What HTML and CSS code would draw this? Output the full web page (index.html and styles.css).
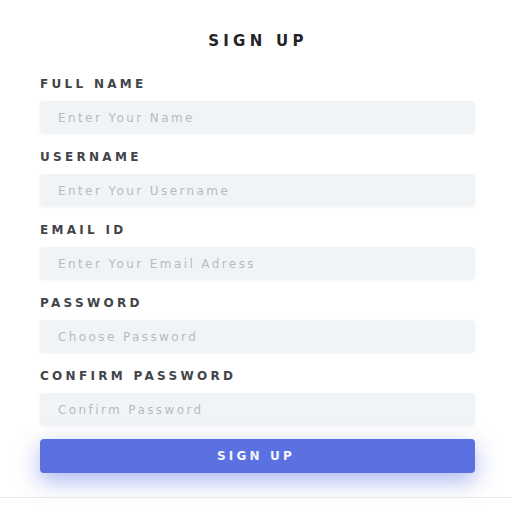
FILE: index.html
```html
<!DOCTYPE html>
<html>
<head>
<meta charset="utf-8">
<link rel="stylesheet" href="styles.css">
</head>
<body>
<div class="page">
  <h1 class="title">SIGN UP</h1>
  <form class="form">
    <div class="field">
      <label class="label">FULL NAME</label>
      <input class="input" type="text" placeholder="Enter Your Name">
    </div>
    <div class="field">
      <label class="label">USERNAME</label>
      <input class="input" type="text" placeholder="Enter Your Username">
    </div>
    <div class="field">
      <label class="label">EMAIL ID</label>
      <input class="input" type="text" placeholder="Enter Your Email Adress">
    </div>
    <div class="field">
      <label class="label">PASSWORD</label>
      <input class="input" type="password" placeholder="Choose Password">
    </div>
    <div class="field">
      <label class="label">CONFIRM PASSWORD</label>
      <input class="input" type="password" placeholder="Confirm Password">
    </div>
    <button class="btn" type="button">SIGN UP</button>
  </form>
  <div class="footer"></div>
</div>
</body>
</html>
```
FILE: styles.css
```css
html, body {
  margin: 0;
  padding: 0;
  background: #ffffff;
  font-family: "DejaVu Sans", "Liberation Sans", sans-serif;
}
.page {
  width: 512px;
  height: 512px;
  display: flex;
  flex-direction: column;
  overflow: hidden;
}
.title {
  margin: 31px 0 0 0;
  height: 20px;
  line-height: 20px;
  font-size: 15px;
  font-weight: bold;
  letter-spacing: 4.3px;
  text-align: center;
  color: #222428;
  padding-left: 4px;
}
.form {
  margin: 25px 37px 0 40px;
  display: flex;
  flex-direction: column;
}
.field {
  display: flex;
  flex-direction: column;
  margin-bottom: 16px;
}
.field:last-of-type {
  margin-bottom: 14px;
}
.label {
  height: 16px;
  line-height: 16px;
  font-size: 12px;
  font-weight: bold;
  letter-spacing: 3.3px;
  color: #414449;
  margin-bottom: 9px;
}
.input {
  box-sizing: border-box;
  height: 32px;
  width: 100%;
  border: none;
  border-radius: 4px;
  background: #f1f4f7;
  box-shadow: 0 1px 3px rgba(0,0,0,0.07);
  padding: 1px 0 0 18px;
  font-family: "DejaVu Sans", "Liberation Sans", sans-serif;
  font-size: 12px;
  letter-spacing: 2.4px;
  color: #333;
  outline: none;
}
.input::placeholder {
  color: #b6bac2;
}
.btn {
  height: 34px;
  width: 100%;
  border: none;
  border-radius: 4px;
  background: #5b70e1;
  color: #f4f6ff;
  font-family: "DejaVu Sans", "Liberation Sans", sans-serif;
  font-size: 12px;
  font-weight: bold;
  letter-spacing: 3.2px;
  padding-left: 3px;
  box-shadow: 0 8px 22px rgba(91, 112, 225, 0.5);
}
.footer {
  margin-top: 24px;
  border-top: 1px solid #e6e8ea;
}
```
